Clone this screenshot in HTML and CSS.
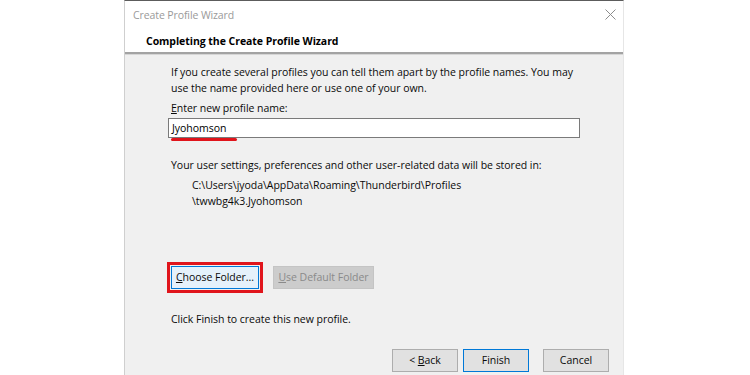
FILE: index.html
```html
<!DOCTYPE html>
<html>
<head>
<meta charset="utf-8">
<link rel="stylesheet" href="styles.css">
</head>
<body>
<div class="dialog">
  <div class="titlebar">
    <span class="title">Create Profile Wizard</span>
    <svg class="close" width="11" height="11" viewBox="0 0 11 11"><path d="M0.5 0.5 L10.5 10.5 M10.5 0.5 L0.5 10.5" stroke="#8c8c8c" stroke-width="1" fill="none"/></svg>
  </div>
  <div class="header">Completing the Create Profile Wizard</div>
  <div class="body">
    <p class="text intro">If you create several profiles you can tell them apart by the profile names. You may<br>use the name provided here or use one of your own.</p>
    <p class="text label"><u>E</u>nter new profile name:</p>
    <div class="field">
      <div class="input">Jyohomson</div>
      <span class="mark"></span>
    </div>
    <p class="text info">Your user settings, preferences and other user-related data will be stored in:</p>
    <p class="text path">C:\Users\jyoda\AppData\Roaming\Thunderbird\Profiles<br>\twwbg4k3.Jyohomson</p>
    <div class="folder-row">
      <button class="btn btn-hover btn-marked"><u>C</u>hoose Folder...</button>
      <button class="btn btn-disabled"><u>U</u>se Default Folder</button>
    </div>
    <p class="text finish-note">Click Finish to create this new profile.</p>
    <div class="footer">
      <button class="btn btn-nav">&lt; <u>B</u>ack</button>
      <button class="btn btn-nav btn-default">Finish</button>
      <button class="btn btn-nav btn-cancel">Cancel</button>
    </div>
  </div>
</div>
</body>
</html>
```
FILE: styles.css
```css
html, body {
  margin: 0;
  padding: 0;
  background: #ffffff;
}

body {
  font-family: "Open Sans", "Noto Sans", sans-serif;
  font-size: 10.5px;
  letter-spacing: -0.03px;
  color: #0a0a0a;
}

.dialog {
  margin-left: 124px;
  width: 498px;
  height: 374px;
  border-top: 1px solid #5c5c5c;
  border-left: 1px solid #cfcfcf;
  border-right: 1px solid #e6e6e6;
  display: flex;
  flex-direction: column;
  overflow: hidden;
}

.titlebar {
  height: 29px;
  background: #fff;
  display: flex;
  align-items: center;
  justify-content: space-between;
  padding: 0 7px 0 8px;
}

.title {
  color: #9a9a9a;
  font-size: 10.5px;
  letter-spacing: -0.1px;
  margin-top: -1px;
}

.close {
  display: block;
  margin-top: -2px;
}

.header {
  height: 22px;
  background: #fff;
  padding-left: 21px;
  font-weight: 700;
  font-size: 10.5px;
  letter-spacing: -0.05px;
  line-height: 22px;
  color: #000;
  border-bottom: 2px solid #a3a3a3;
  box-shadow: 0 1px 0 #d6d6d6;
  position: relative;
  z-index: 1;
}

.body {
  flex: 1;
  background: #f0f0f0;
  padding: 10px 0 0 46px;
  display: flex;
  flex-direction: column;
}

.text {
  margin: 0;
  line-height: 16px;
}

.label {
  margin-top: 4px;
}

.field {
  position: relative;
  margin: 2px 0 0 -3px;
  width: 412px;
}

.input {
  height: 18px;
  border: 1px solid #7a7a7a;
  background: #fff;
  padding-left: 3px;
  line-height: 18px;
  color: #000;
}

.mark {
  position: absolute;
  left: 3px;
  top: 20px;
  width: 66px;
  height: 3px;
  border-radius: 2px;
  background: #e0141b;
}

.info {
  margin-top: 19px;
}

.path {
  margin-top: 4px;
  padding-left: 21px;
}

.folder-row {
  display: flex;
  gap: 14px;
  margin-top: 57px;
}

.btn {
  font-family: inherit;
  font-size: 10.5px;
  letter-spacing: -0.03px;
  height: 23px;
  padding: 0;
  margin: 0;
  background: #e1e1e1;
  border: 1px solid #adadad;
  color: #0a0a0a;
  line-height: 21px;
}

.btn-hover {
  width: 88px;
  background: #e5f1fb;
  border-color: #0078d7;
}

.btn-marked {
  outline: 3px solid #e0141b;
  outline-offset: 1px;
  border-radius: 0;
}

.btn-disabled {
  width: 101px;
  background: #cccccc;
  border-color: #c4c4c4;
  color: #8a8a8a;
}

.finish-note {
  margin-top: 22px;
}

.footer {
  display: flex;
  justify-content: flex-end;
  padding-right: 14px;
  margin-top: 22px;
}

.btn-nav {
  width: 66px;
}

.btn-default {
  margin-left: 5px;
  border-color: #0078d7;
}

.btn-cancel {
  margin-left: 14px;
}
```
